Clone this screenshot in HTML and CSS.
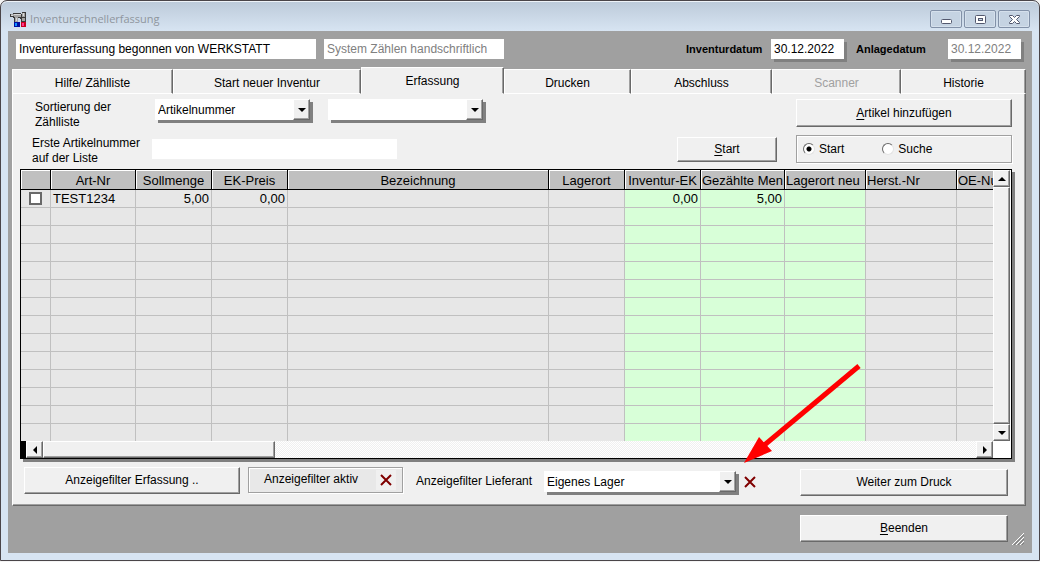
FILE: index.html
```html
<!DOCTYPE html>
<html lang="de">
<head>
<meta charset="utf-8">
<title>Inventurschnellerfassung</title>
<link rel="stylesheet" href="styles.css">
</head>
<body>
<div class="window">
  <header class="titlebar">
    <svg class="app-icon" width="18" height="18" viewBox="0 0 18 18" shape-rendering="crispEdges" aria-hidden="true">
      <path d="M0 4h3V3h8v1h1V2h4v12h-5V9h-1V8H8v4H4V8H3V7H0z" fill="#3a3a3a"/>
      <path d="M1 4h3v2H1zM4 4h7v3H4zM12 3h3v4h-3zM5 7h3v5H5zM12 8h3v3h-3z" fill="#a4a4a4"/>
      <path d="M4 4h7v1H4zM13 3h1v3h-1zM6 8h1v3H6zM1 5h2v1H1z" fill="#d8d8d8"/>
      <path d="M4 12h6v5H4z" fill="#0010a0"/><path d="M5 13h2v3H5z" fill="#1090ff"/>
      <path d="M11 12h5v5h-5z" fill="#c80020"/><path d="M12 13h2v3h-2z" fill="#ff3890"/>
    </svg>
    <h1 class="title">Inventurschnellerfassung</h1>
    <div class="window-buttons">
      <button class="win-btn" aria-label="Minimieren"><svg width="13" height="11" viewBox="0 0 13 11"><rect x="1.500" y="5.500" width="10" height="4" rx="1" fill="#fff" stroke="#53586e"/></svg></button>
      <button class="win-btn" aria-label="Maximieren"><svg width="13" height="11" viewBox="0 0 13 11"><rect x="1.500" y="1.500" width="10" height="8" rx="1" fill="#fff" stroke="#53586e"/><rect x="4.500" y="4.500" width="4" height="2" fill="#c5d3e2" stroke="#53586e"/></svg></button>
      <button class="win-btn" aria-label="Schließen"><svg width="13" height="11" viewBox="0 0 13 11"><path d="M1.500 1.500h3l2 2 2-2h3v1l-3 3 3 3v1h-3l-2-2-2 2h-3v-1l3-3-3-3z" fill="#fff" stroke="#53586e"/></svg></button>
    </div>
  </header>

  <main class="client">
    <div class="status-row">
      <input class="field status-main" type="text" value="Inventurerfassung begonnen von WERKSTATT" aria-label="Status" readonly>
      <input class="field status-system muted" type="text" value="System Zählen handschriftlich" aria-label="System" readonly>
      <div class="dates">
        <label class="strong" for="invdate">Inventurdatum</label>
        <input class="field date raised" id="invdate" type="text" value="30.12.2022">
        <label class="strong label-created" for="created">Anlagedatum</label>
        <input class="field date raised muted" id="created" type="text" value="30.12.2022" readonly>
      </div>
    </div>

    <div class="tabs" role="tablist">
      <button class="tab" role="tab">Hilfe/ Zählliste</button>
      <button class="tab" role="tab">Start neuer Inventur</button>
      <button class="tab active" role="tab" aria-selected="true">Erfassung</button>
      <button class="tab" role="tab">Drucken</button>
      <button class="tab" role="tab">Abschluss</button>
      <button class="tab" role="tab" disabled>Scanner</button>
      <button class="tab" role="tab">Historie</button>
    </div>

    <section class="panel">
      <div class="form-row sort-row">
        <label class="form-label" for="sort">Sortierung der<br>Zählliste</label>
        <div class="combo raised">
          <select id="sort"><option>Artikelnummer</option></select>
          <span class="combo-btn"><svg width="8" height="4" viewBox="0 0 8 4"><path d="M0 0h8L4 4z"/></svg></span>
        </div>
        <div class="combo combo-second raised">
          <select aria-label="Zweite Sortierung"><option></option></select>
          <span class="combo-btn"><svg width="8" height="4" viewBox="0 0 8 4"><path d="M0 0h8L4 4z"/></svg></span>
        </div>
        <button class="btn add-btn"><u>A</u>rtikel hinzufügen</button>
      </div>
      <div class="form-row first-row">
        <label class="form-label" for="first">Erste Artikelnummer<br>auf der Liste</label>
        <input class="field first-field" id="first" type="text">
        <button class="btn start-btn"><u>S</u>tart</button>
        <div class="radio-group" role="radiogroup" aria-label="Modus">
          <label class="radio"><input type="radio" name="mode" checked>Start</label>
          <label class="radio"><input type="radio" name="mode">Suche</label>
        </div>
      </div>

      <div class="grid raised">
        <div class="grid-view">
          <table>
            <colgroup>
              <col class="c-check"><col class="c-art"><col class="c-num"><col class="c-num"><col><col class="c-num"><col class="c-num"><col class="c-count"><col class="c-place"><col class="c-maker"><col class="c-oe">
            </colgroup>
            <thead>
              <tr><th></th><th>Art-Nr</th><th>Sollmenge</th><th>EK-Preis</th><th>Bezeichnung</th><th>Lagerort</th><th>Inventur-EK</th><th class="left">Gezählte Men</th><th class="left">Lagerort neu</th><th class="left">Herst.-Nr</th><th class="left">OE-Nu</th></tr>
            </thead>
            <tbody>
              <tr><td class="check"><input type="checkbox" aria-label="TEST1234 auswählen"></td><td>TEST1234</td><td class="num">5,00</td><td class="num">0,00</td><td></td><td></td><td class="num edit">0,00</td><td class="num edit">5,00</td><td class="edit"></td><td></td><td></td></tr>
              <tr><td></td><td></td><td></td><td></td><td></td><td></td><td class="edit"></td><td class="edit"></td><td class="edit"></td><td></td><td></td></tr>
              <tr><td></td><td></td><td></td><td></td><td></td><td></td><td class="edit"></td><td class="edit"></td><td class="edit"></td><td></td><td></td></tr>
              <tr><td></td><td></td><td></td><td></td><td></td><td></td><td class="edit"></td><td class="edit"></td><td class="edit"></td><td></td><td></td></tr>
              <tr><td></td><td></td><td></td><td></td><td></td><td></td><td class="edit"></td><td class="edit"></td><td class="edit"></td><td></td><td></td></tr>
              <tr><td></td><td></td><td></td><td></td><td></td><td></td><td class="edit"></td><td class="edit"></td><td class="edit"></td><td></td><td></td></tr>
              <tr><td></td><td></td><td></td><td></td><td></td><td></td><td class="edit"></td><td class="edit"></td><td class="edit"></td><td></td><td></td></tr>
              <tr><td></td><td></td><td></td><td></td><td></td><td></td><td class="edit"></td><td class="edit"></td><td class="edit"></td><td></td><td></td></tr>
              <tr><td></td><td></td><td></td><td></td><td></td><td></td><td class="edit"></td><td class="edit"></td><td class="edit"></td><td></td><td></td></tr>
              <tr><td></td><td></td><td></td><td></td><td></td><td></td><td class="edit"></td><td class="edit"></td><td class="edit"></td><td></td><td></td></tr>
              <tr><td></td><td></td><td></td><td></td><td></td><td></td><td class="edit"></td><td class="edit"></td><td class="edit"></td><td></td><td></td></tr>
              <tr><td></td><td></td><td></td><td></td><td></td><td></td><td class="edit"></td><td class="edit"></td><td class="edit"></td><td></td><td></td></tr>
              <tr><td></td><td></td><td></td><td></td><td></td><td></td><td class="edit"></td><td class="edit"></td><td class="edit"></td><td></td><td></td></tr>
              <tr><td></td><td></td><td></td><td></td><td></td><td></td><td class="edit"></td><td class="edit"></td><td class="edit"></td><td></td><td></td></tr>
            </tbody>
          </table>
        </div>
        <div class="vbar">
          <button class="sb" aria-label="Nach oben"><svg width="8" height="4" viewBox="0 0 8 4"><path d="M0 4h8L4 0z"/></svg></button>
          <span class="vthumb"></span>
          <button class="sb" aria-label="Nach unten"><svg width="8" height="4" viewBox="0 0 8 4"><path d="M0 0h8L4 4z"/></svg></button>
        </div>
        <div class="hbar">
          <button class="sb" aria-label="Nach links"><svg width="4" height="8" viewBox="0 0 4 8"><path d="M4 0v8L0 4z"/></svg></button>
          <span class="hthumb"></span>
          <button class="sb sb-right" aria-label="Nach rechts"><svg width="4" height="8" viewBox="0 0 4 8"><path d="M0 0v8l4-4z"/></svg></button>
        </div>
        <div class="corner"></div>
      </div>

      <div class="filter-row">
        <button class="btn filter-btn">Anzeigefilter Erfassung ..</button>
        <div class="filter-box">
          <span>Anzeigefilter aktiv</span>
          <button class="clear boxed" aria-label="Filter löschen"><svg width="12" height="12" viewBox="0 0 12 12"><path d="M1 1l10 10M11 1L1 11" stroke="#800000" stroke-width="2"/></svg></button>
        </div>
        <label class="supplier-label" for="supplier">Anzeigefilter Lieferant</label>
        <div class="combo supplier raised">
          <select id="supplier"><option>Eigenes Lager</option></select>
          <span class="combo-btn"><svg width="8" height="4" viewBox="0 0 8 4"><path d="M0 0h8L4 4z"/></svg></span>
        </div>
        <div class="clear-wrap">
          <button class="clear" aria-label="Lieferant löschen"><svg width="12" height="12" viewBox="0 0 12 12"><path d="M1 1l10 10M11 1L1 11" stroke="#800000" stroke-width="2"/></svg></button>
          <svg class="arrow" width="118" height="100" viewBox="0 0 118 100" aria-hidden="true"><path d="M115 2L18 83" stroke="#f00" stroke-width="5"/><path d="M0 99L15 73l13 14z" fill="#f00"/></svg>
        </div>
        <button class="btn next-btn">Weiter zum Druck</button>
      </div>
    </section>

    <footer class="footer">
      <button class="btn quit-btn"><u>B</u>eenden</button>
    </footer>
    <svg class="grip" width="13" height="13" viewBox="0 0 13 13" aria-hidden="true"><path d="M0 12L12 0M4 12l8-8M8 12l4-4" stroke="#fff"/><path d="M2 12L12 2M6 12l6-6M10 12l2-2" stroke="#808080"/></svg>
  </main>
</div>
</body>
</html>
```
FILE: styles.css
```css
* { box-sizing: border-box; }

body {
  margin: 0;
  background: #f4f4f4;
  color: #000;
  font: 12px/15px "Liberation Sans", Arial, sans-serif;
}

button, input, select { font: inherit; color: inherit; margin: 0; }
button { padding: 0; }
svg { display: block; flex: none; }

.window {
  border: 1px solid #4a4549;
  border-radius: 7px 7px 0 0;
  padding: 0 7px 7px;
  background: linear-gradient(#bccad9, #d7e4f2 30px);
  box-shadow: inset 0 1px 0 #eef3f8;
}

.titlebar { display: flex; align-items: center; height: 30px; padding-top: 6px; }
.app-icon { margin-left: 2px; }
.title { margin: 0 0 0 2px; font: 11px/16px "Open Sans", sans-serif; color: #8f969e; }
.window-buttons { display: flex; gap: 2px; margin-left: auto; padding-right: 2px; }
.win-btn {
  display: grid;
  place-items: center;
  width: 32px;
  height: 18px;
  border: 1px solid #8291a8;
  border-radius: 2px;
  background: #c5d3e2;
  box-shadow: inset 0 0 0 1px #d5e0ec;
}

.client { position: relative; padding: 8px 6px 11px 4px; background: #a0a0a0; }

.status-row { display: flex; gap: 8px; padding-left: 4px; padding-right: 5px; }
.field { height: 20px; padding: 0 3px; border: 0; background: #fff; }
.muted { color: #808080; }
.status-main { width: 300px; }
.status-system { width: 180px; }
.raised { box-shadow: 3px 3px 0 #808080; }
.dates { display: flex; align-items: center; margin-left: auto; }
.strong { width: 85px; font-size: 11px; font-weight: bold; }
.label-created { width: 92px; margin-left: 12px; }
.date { width: 73px; }

.tabs {
  display: grid;
  grid-template-columns: 161fr 188fr 143fr 127fr 141fr 129fr 125fr;
  align-items: end;
  margin-top: 8px;
}
.tab {
  height: 25px;
  padding-top: 3px;
  border: 1px solid #fff;
  border-right-color: #696969;
  background: #f0f0f0;
  box-shadow: inset -1px 0 0 #a0a0a0;
}
.tab.active { height: 27px; padding: 1px 0 0; border-bottom-color: #f0f0f0; }
.tab:disabled { color: #a0a0a0; }

.panel {
  padding: 5px 13px 8px 7px;
  border: solid #fff;
  border-width: 0 1px 1px 1px;
  border-right-color: #696969;
  border-bottom-color: #696969;
  background: #f0f0f0;
  box-shadow: inset -1px -1px 0 #a0a0a0;
}

.form-row { display: flex; align-items: flex-start; height: 30px; }
.sort-row { padding-left: 15px; }
.first-row { margin-top: 6px; padding-left: 12px; }
.form-label { width: 120px; margin-top: 1px; }
.combo { position: relative; width: 155px; height: 21px; }
.combo-second { margin-left: 18px; }
.combo select {
  appearance: none;
  display: block;
  width: 100%;
  height: 100%;
  padding: 1px 20px 0 3px;
  border: 0;
  border-radius: 0;
  background: #fff;
}
.combo-btn {
  position: absolute;
  top: 0;
  right: 0;
  display: grid;
  place-items: center;
  width: 17px;
  height: 100%;
  pointer-events: none;
}
.combo-btn, .sb, .btn {
  border: 1px solid #fff;
  border-right-color: #696969;
  border-bottom-color: #696969;
  background: #f0f0f0;
}
.btn, .combo-btn, .sb, .vthumb, .hthumb { box-shadow: inset -1px -1px 0 #a0a0a0; }
u { text-underline-offset: 2px; }

.add-btn { width: 216px; height: 28px; margin-left: auto; }
.first-field { width: 245px; margin-top: 4px; }
.start-btn { width: 100px; height: 25px; margin: 2px 19px 0 auto; }
.radio-group {
  display: flex;
  align-items: center;
  gap: 38px;
  width: 216px;
  height: 28px;
  padding-left: 6px;
  border: 1px solid #a0a0a0;
  box-shadow: 1px 1px 0 #fff, inset 1px 1px 0 #fff;
}
.radio { display: flex; align-items: center; gap: 4px; }
.radio input {
  appearance: none;
  width: 12px;
  height: 12px;
  border: 1px solid;
  border-color: #696969 #e3e3e3 #e3e3e3 #696969;
  border-radius: 50%;
  background: #fff;
}
.radio input:checked { background: radial-gradient(circle, #000 2px, #fff 3px); }

.grid {
  display: grid;
  grid-template-columns: minmax(0, 1fr) 18px;
  margin-top: 4px;
  border: 1px solid #000;
}
.grid-view { overflow: hidden; }
table {
  width: 100%;
  table-layout: fixed;
  border-collapse: separate;
  border-spacing: 0;
  font-size: 13px;
  line-height: 16px;
}
.c-check { width: 30px; }
.c-art { width: 85px; }
.c-num { width: 76px; }
.c-count { width: 84px; }
.c-place { width: 81px; }
.c-maker { width: 91px; }
.c-oe { width: 36px; }
th {
  height: 20px;
  padding: 2px 0 0;
  overflow: hidden;
  border: solid #000;
  border-width: 0 1px 1px 0;
  background: #c0c0c0;
  box-shadow: inset 1px 1px 0 #fff;
  font-weight: normal;
  white-space: nowrap;
}
th.left { padding-left: 1px; text-align: left; }
td {
  height: 18px;
  padding: 0 2px;
  border: solid #c0c0c0;
  border-width: 0 1px 1px 0;
  background: #e7e7e7;
}
th:last-child, td:last-child { border-right: 0; }
tbody tr:last-child td { height: 17px; border-bottom: 0; }
.num { text-align: right; }
.edit { background: #d8ffd8; }
.check input {
  appearance: none;
  display: block;
  width: 13px;
  height: 13px;
  margin: 0 auto;
  border: 2px solid #696969;
  background: #fff;
}

.sb { display: grid; place-items: center; flex: none; width: 17px; height: 17px; }
.vbar { display: flex; flex-direction: column; padding-right: 1px; background: #fff; }
.vthumb, .hthumb {
  border: 1px solid #fff;
  border-right-color: #696969;
  border-bottom-color: #696969;
  background: #f0f0f0;
}
.vthumb { flex: 1; }
.hbar {
  display: flex;
  height: 17px;
  border-left: 5px solid #000;
  background: repeating-conic-gradient(#fff 0 25%, #f0f0f0 0 50%) 0 0 / 2px 2px;
}
.hthumb { width: 24%; }
.sb-right { margin-left: auto; }
.corner { background: #fff; }

.filter-row { display: flex; align-items: flex-start; height: 30px; margin-top: 8px; padding: 0 4px; }
.filter-btn { width: 216px; height: 27px; }
.filter-box {
  display: flex;
  justify-content: space-between;
  width: 155px;
  height: 26px;
  margin-left: 8px;
  padding: 2px 6px 0 15px;
  border: 1px solid #a0a0a0;
  background: #e8e8e8;
  box-shadow: 1px 1px 0 #fff, inset 1px 1px 0 #fff;
  line-height: 18px;
}
.clear { display: grid; place-items: center; width: 12px; height: 20px; border: 0; background: none; }
.clear.boxed { width: 20px; background: #f0f0f0; }
.supplier-label { width: 128px; margin: 7px 0 0 13px; }
.supplier { width: 192px; margin-top: 4px; }
.clear-wrap { position: relative; margin: 5px 0 0 8px; }
.arrow { position: absolute; left: 0; bottom: 28px; pointer-events: none; }
.next-btn { width: 208px; height: 27px; margin: 2px 0 0 auto; }

.footer { display: flex; justify-content: flex-end; padding: 9px 18px 0 0; }
.quit-btn { width: 208px; height: 27px; }
.grip { position: absolute; right: 7px; bottom: 7px; }
```
